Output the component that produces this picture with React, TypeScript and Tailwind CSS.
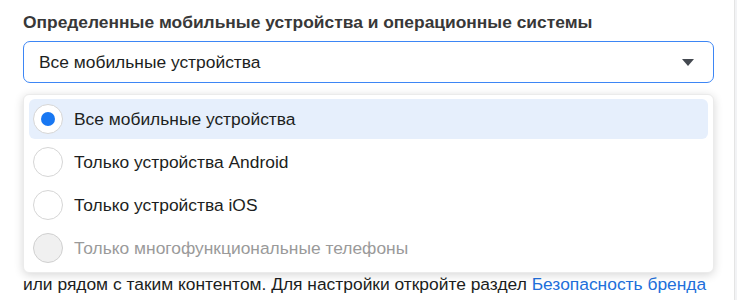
import React from "react";

interface OptionProps {
  label: string;
  selected?: boolean;
  disabled?: boolean;
}

const Option: React.FC<OptionProps> = ({ label, selected, disabled }) => {
  return (
    <li
      className={
        "h-[40px] px-[4px] flex items-center gap-[11px] rounded-[6px] " +
        (selected ? "bg-[#e6effc]" : "")
      }
    >
      <span
        className={
          "w-[30px] h-[30px] rounded-full border flex items-center justify-center " +
          (disabled
            ? "bg-[#f0f0f0] border-[#d0d0d0]"
            : "bg-white border-[#d6d6d6]")
        }
      >
        {selected && <span className="w-[14px] h-[14px] rounded-full bg-[#1877f2]" />}
      </span>
      <span
        className={
          "text-[17.4px] leading-[20px] " +
          (disabled ? "text-[#9a9a9a]" : "text-[#1c1e21]")
        }
      >
        {label}
      </span>
    </li>
  );
};

export default function App() {
  return (
    <div className="w-[737px] h-[300px] flex overflow-hidden bg-white font-['Liberation_Sans',Arial,sans-serif]">
      <main className="w-[734px] shrink-0 pl-[23px] pr-[20px] pt-[12px] flex flex-col">
        <h2 className="text-[17.4px] font-bold text-[#383838] leading-[20px]">
          Определенные мобильные устройства и операционные системы
        </h2>
        <section className="relative mt-[9px]">
          <button className="w-full h-[42px] px-[15px] flex items-center justify-between border border-[#3d86f5] rounded-[7px] bg-white">
            <span className="text-[17.4px] leading-[20px] text-[#1c1e21]">
              Все мобильные устройства
            </span>
            <svg width="12" height="7" viewBox="0 0 12 7" className="mr-[4px]">
              <path d="M0 0h12L6 7z" fill="#444950" />
            </svg>
          </button>
          <ul className="absolute left-0 right-0 top-[53px] z-10 bg-white rounded-[6px] shadow-[0_2px_10px_rgba(0,0,0,0.16)] border border-[#ebebeb] px-[5px] py-[4px] flex flex-col gap-[3px]">
            <Option label="Все мобильные устройства" selected />
            <Option label="Только устройства Android" />
            <Option label="Только устройства iOS" />
            <Option label="Только многофункциональные телефоны" disabled />
          </ul>
          <p className="mt-[191px] text-[17.4px] text-[#1c1e21] leading-[20px]">
            или рядом с таким контентом. Для настройки откройте раздел{" "}
            <a className="text-[#216fdb]">Безопасность бренда</a>
          </p>
        </section>
      </main>
      <aside className="flex-1 bg-[#f2f3f5] border-l border-[#e4e4e4]" />
    </div>
  );
}
